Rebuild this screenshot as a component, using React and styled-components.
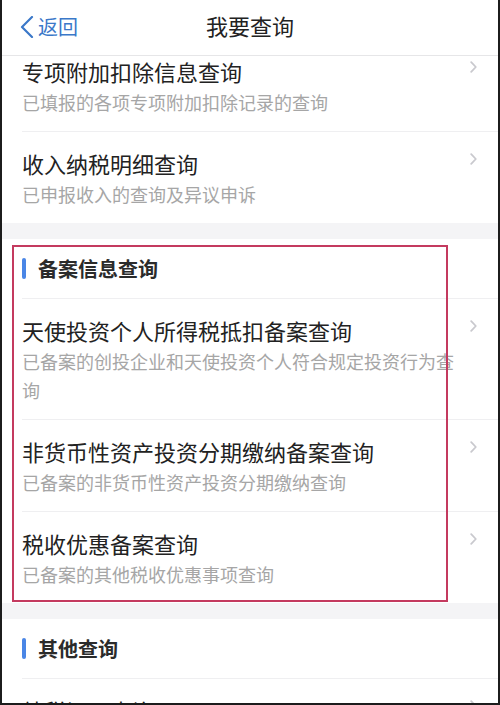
import React from "react";
import styled, { createGlobalStyle } from "styled-components";

const GlobalStyle = createGlobalStyle`
  html, body {
    margin: 0;
    padding: 0;
    background: #ffffff;
  }
  body {
    font-family: "Noto Sans CJK SC", "Noto Sans", sans-serif;
    -webkit-font-smoothing: antialiased;
  }
`;

const groups = [
  {
    items: [
      { title: "专项附加扣除信息查询", desc: "已填报的各项专项附加扣除记录的查询" },
      { title: "收入纳税明细查询", desc: "已申报收入的查询及异议申诉" },
    ],
  },
  {
    head: "备案信息查询",
    marked: true,
    items: [
      { title: "天使投资个人所得税抵扣备案查询", desc: "已备案的创投企业和天使投资个人符合规定投资行为查询" },
      { title: "非货币性资产投资分期缴纳备案查询", desc: "已备案的非货币性资产投资分期缴纳查询" },
      { title: "税收优惠备案查询", desc: "已备案的其他税收优惠事项查询" },
    ],
  },
  {
    head: "其他查询",
    items: [{ title: "纳税记录查询", desc: "已开具的纳税记录查询" }],
  },
];

export default function App() {
  return (
    <Frame>
      <GlobalStyle />
      <NavBar>
        <Back>
          <svg width="14" height="22" viewBox="0 0 14 22">
            <polyline points="12,1 2,11 12,21" fill="none" stroke="#3b78c9" strokeWidth="2.2" strokeLinecap="round" strokeLinejoin="round" />
          </svg>
          <span>返回</span>
        </Back>
        <Title>我要查询</Title>
      </NavBar>
      <Body>
        <Scroller>
          {groups.map((g, gi) => (
            <React.Fragment key={gi}>
              {gi > 0 && <Gap />}
              <Group>
                {g.head && (
                  <SectionHead>
                    <Mark />
                    {g.head}
                  </SectionHead>
                )}
                {g.items.map((it, i) => (
                  <Row key={i}>
                    <Texts>
                      <ItemTitle>{it.title}</ItemTitle>
                      <ItemDesc>{it.desc}</ItemDesc>
                    </Texts>
                    <Chevron width="7" height="12" viewBox="0 0 7 12">
                      <polyline points="1.2,1.2 5.8,6 1.2,10.8" fill="none" stroke="#c9c9ce" strokeWidth="1.8" strokeLinecap="round" strokeLinejoin="round" />
                    </Chevron>
                  </Row>
                ))}
                {g.marked && <Annotation />}
              </Group>
            </React.Fragment>
          ))}
        </Scroller>
      </Body>
    </Frame>
  );
}

const Frame = styled.div`
  width: 500px;
  height: 705px;
  box-sizing: border-box;
  border-left: 2px solid #1c1c1c;
  border-right: 2px solid #1c1c1c;
  border-bottom: 2px solid #1c1c1c;
  display: flex;
  flex-direction: column;
  overflow: hidden;
  background: #fff;
`;

const NavBar = styled.div`
  height: 56px;
  flex: none;
  position: relative;
  display: flex;
  align-items: center;
  justify-content: center;
  border-bottom: 1px solid #e6e6e8;
  box-sizing: border-box;
  background: #fff;
  z-index: 2;
`;

const Back = styled.div`
  position: absolute;
  left: 18px;
  top: 15px;
  display: flex;
  align-items: center;
  gap: 4px;
  color: #3b78c9;
  font-size: 20px;
  line-height: 24px;
`;

const Title = styled.div`
  font-size: 22px;
  line-height: 28px;
  color: #222;
  margin-top: -5px;
`;

const Body = styled.div`
  flex: 1;
  overflow: hidden;
`;

const Scroller = styled.div`
  margin-top: -16px;
`;

const Gap = styled.div`
  height: 16px;
  background: #f4f4f6;
`;

const Group = styled.div`
  position: relative;
  background: #fff;
`;

const SectionHead = styled.div`
  height: 60px;
  margin-left: 20px;
  display: flex;
  align-items: center;
  gap: 12px;
  font-size: 20px;
  font-weight: 700;
  color: #2b2b2b;
  border-bottom: 1px solid #efeff1;
  box-sizing: border-box;
`;

const Mark = styled.span`
  width: 4px;
  height: 21px;
  border-radius: 2px;
  background: #4a86e6;
`;

const Row = styled.div`
  margin-left: 20px;
  padding: 15px 0 14px 0;
  display: flex;
  align-items: flex-start;
  & + & {
    border-top: 1px solid #efeff1;
  }
`;

const Texts = styled.div`
  flex: 1;
  min-width: 0;
`;

const ItemTitle = styled.div`
  font-size: 22px;
  line-height: 32px;
  color: #222;
`;

const ItemDesc = styled.div`
  margin-top: 1px;
  font-size: 18px;
  line-height: 29px;
  color: #a6a6a6;
`;

const Chevron = styled.svg`
  flex: none;
  margin: 6px 21px 0 10px;
`;

const Annotation = styled.div`
  position: absolute;
  left: 10px;
  top: 6px;
  width: 436px;
  bottom: 1px;
  box-sizing: border-box;
  border: 2px solid #c43a5f;
  pointer-events: none;
`;
